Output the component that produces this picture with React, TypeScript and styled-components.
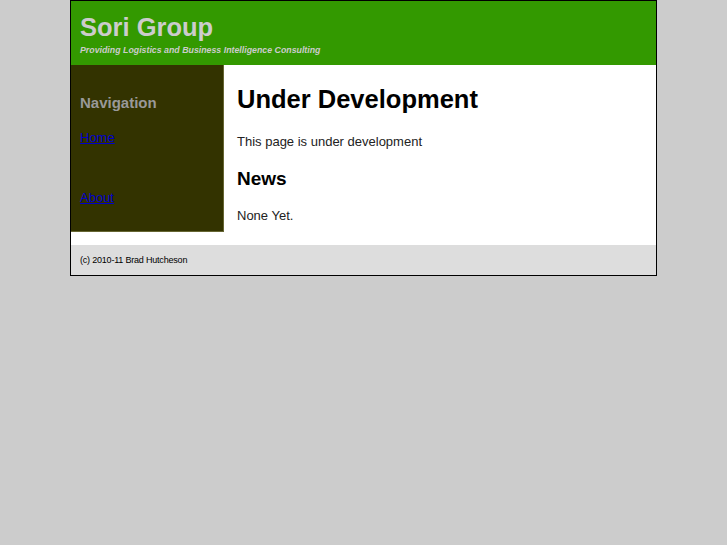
import styled, { createGlobalStyle } from 'styled-components';

let GlobalStyle = createGlobalStyle`
  html, body {
    margin: 0;
    padding: 0;
    background: #cccccc;
    font-family: "Liberation Sans", Arial, sans-serif;
  }
`;

let Page = styled.div`
  width: 585px;
  margin: 0 auto;
  border: 1px solid #000000;
  background: #ffffff;
`;

let Header = styled.header`
  height: 64px;
  background: #339900;
  padding: 0 9px;
  box-sizing: border-box;
  overflow: hidden;
`;

let Title = styled.h1`
  margin: 12px 0 0;
  font-size: 25.5px;
  line-height: 29px;
  font-weight: bold;
  color: #cccccc;
`;

let Tagline = styled.p`
  margin: 3px 0 0;
  font-size: 8.8px;
  line-height: 11px;
  font-weight: bold;
  font-style: italic;
  color: #cccccc;
`;

let Body = styled.div`
  display: flex;
  align-items: flex-start;
`;

let Sidebar = styled.nav`
  width: 153px;
  height: 167px;
  flex-shrink: 0;
  box-sizing: border-box;
  background: #333300;
  border-right: 1px solid #666633;
  border-bottom: 1px solid #666633;
  padding: 29px 9px 0;
`;

let NavTitle = styled.h3`
  margin: 0;
  font-size: 15px;
  line-height: 18px;
  font-weight: bold;
  color: #999999;
`;

let NavList = styled.ul`
  list-style: none;
  margin: 16px 0 0;
  padding: 0;
  display: flex;
  flex-direction: column;
  gap: 42px;
`;

let NavLink = styled.a`
  font-size: 13px;
  line-height: 15px;
  color: #0000cc;
  text-decoration: underline;
`;

let Main = styled.main`
  flex: 1;
  padding: 18px 13px 0;
  height: 180px;
  box-sizing: border-box;
`;

let Heading = styled.h1`
  margin: 0;
  padding-bottom: 1px;
  font-size: 25.5px;
  line-height: 32px;
  color: #000000;
`;

let SubHeading = styled.h2`
  margin: 18px 0 0;
  font-size: 19px;
  line-height: 22px;
  color: #000000;
`;

let Text = styled.p`
  margin: 18px 0 0;
  font-size: 13px;
  line-height: 16px;
  color: #222222;
`;

let Footer = styled.footer`
  height: 30px;
  background: #dddddd;
  padding: 0 9px;
  display: flex;
  align-items: center;
  font-size: 9px;
  color: #000000;
  letter-spacing: -0.2px;
`;

export default function App() {
  return (
    <>
      <GlobalStyle />
      <Page>
        <Header>
          <Title>Sori Group</Title>
          <Tagline>Providing Logistics and Business Intelligence Consulting</Tagline>
        </Header>
        <Body>
          <Sidebar>
            <NavTitle>Navigation</NavTitle>
            <NavList>
              <li>
                <NavLink href="#">Home</NavLink>
              </li>
              <li>
                <NavLink href="#">About</NavLink>
              </li>
            </NavList>
          </Sidebar>
          <Main>
            <Heading>Under Development</Heading>
            <Text>This page is under development</Text>
            <SubHeading>News</SubHeading>
            <Text>None Yet.</Text>
          </Main>
        </Body>
        <Footer>(c) 2010-11 Brad Hutcheson</Footer>
      </Page>
    </>
  );
}
